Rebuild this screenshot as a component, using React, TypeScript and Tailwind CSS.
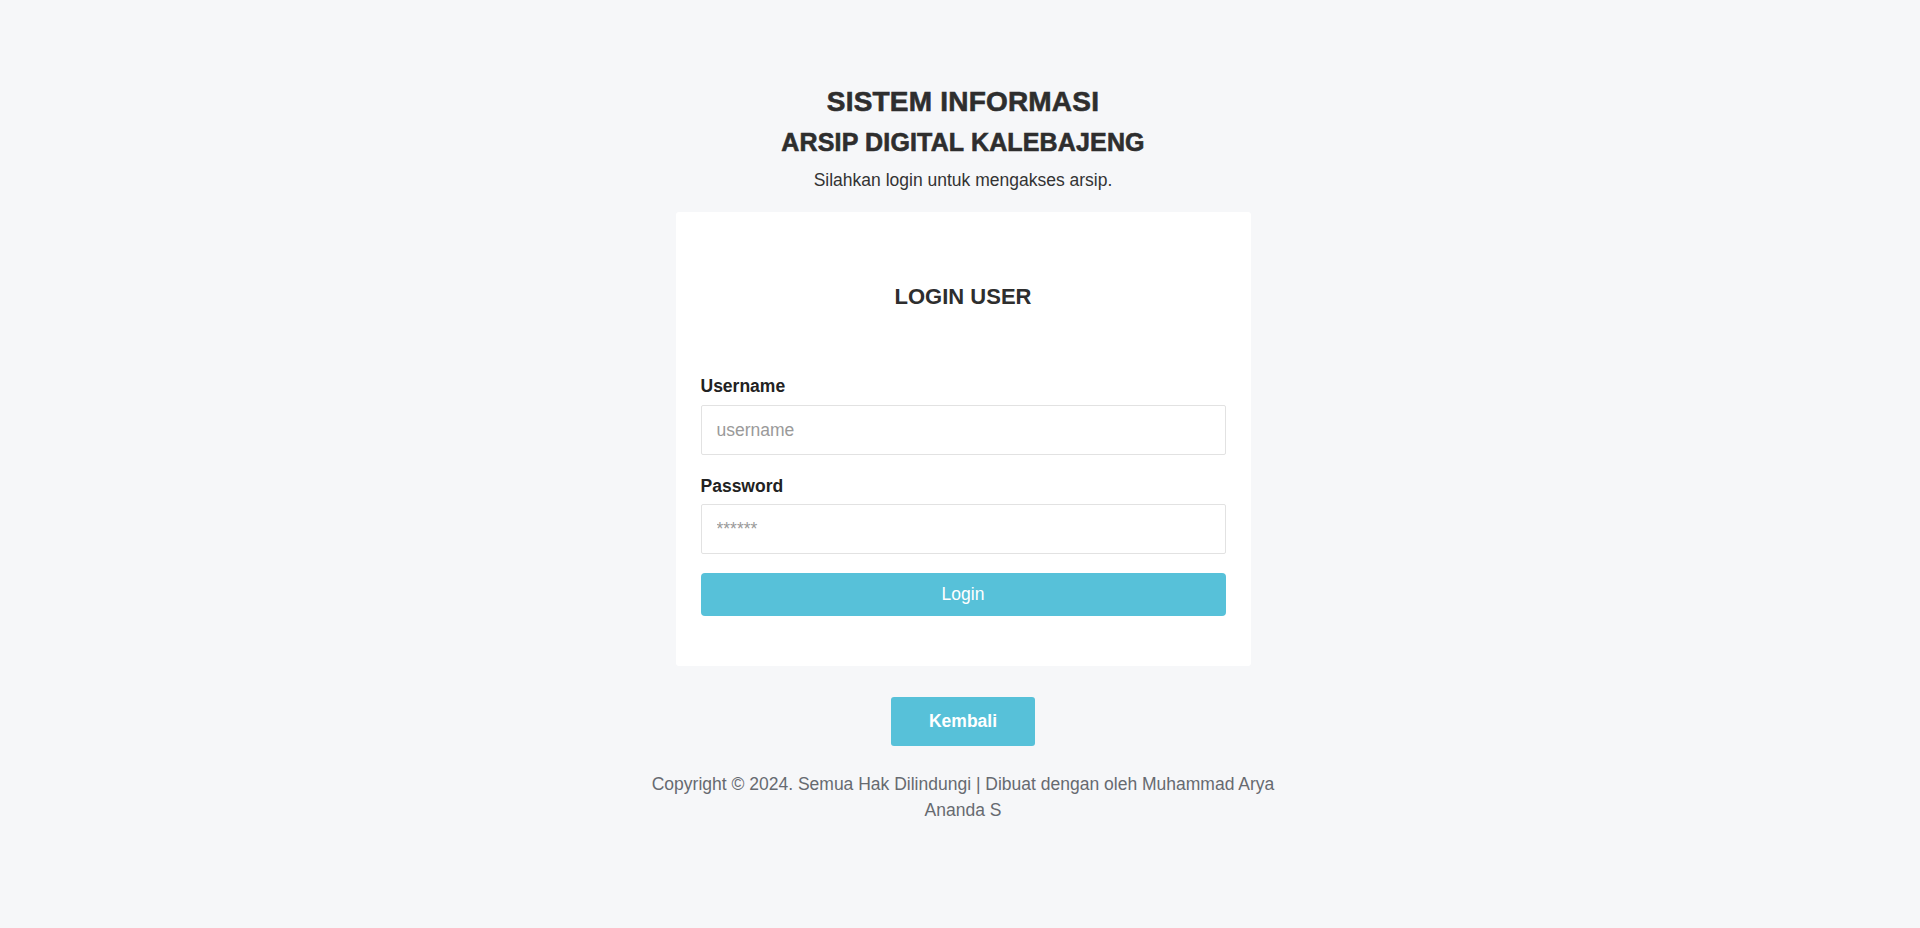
export default function App() {
  return (
    <div className="min-h-screen w-full bg-[#f6f7f9] font-['Liberation_Sans',Arial,sans-serif] text-[#333333]">
      <div className="flex flex-col items-center pt-[85px] pb-10 pl-[6px]">
        {/* Header */}
        <h1 className="text-[28px] leading-[34px] font-bold tracking-[0.2px] text-[#2e2e2e] [-webkit-text-stroke:0.6px_#2e2e2e]">
          SISTEM INFORMASI
        </h1>
        <h2 className="mt-[8px] text-[25px] leading-[30px] font-bold tracking-[0.15px] text-[#2e2e2e] [-webkit-text-stroke:0.6px_#2e2e2e]">
          ARSIP DIGITAL KALEBAJENG
        </h2>
        <p className="mt-[10px] text-[17.5px] leading-[26px] text-[#333333]">Silahkan login untuk mengakses arsip.</p>

        {/* Login card */}
        <div className="mt-[19px] w-[575px] rounded-[3px] bg-white px-[25px] pt-[71px] pb-[50px]">
          <h3 className="text-center text-[22px] leading-[28px] font-bold text-[#2e2e2e]">LOGIN USER</h3>

          <form className="mt-[62px] flex flex-col" onSubmit={(e) => e.preventDefault()}>
            <label className="text-[17.5px] leading-[26px] font-bold text-[#222222]">Username</label>
            <input
              type="text"
              placeholder="username"
              className="mt-[6px] h-[50px] w-full rounded-[2px] border border-[#e2e2e2] bg-white px-[15px] text-[17.5px] text-[#333333] outline-none placeholder:text-[#9a9a9a]"
            />

            <label className="mt-[18px] text-[17.5px] leading-[26px] font-bold text-[#222222]">Password</label>
            <input
              type="password"
              placeholder="******"
              className="mt-[5px] h-[50px] w-full rounded-[2px] border border-[#e2e2e2] bg-white px-[15px] text-[17.5px] text-[#333333] outline-none placeholder:text-[#9a9a9a]"
            />

            <button
              type="submit"
              className="mt-[19px] h-[43px] w-full rounded-[4px] bg-[#57c1d9] text-[17.5px] text-white"
            >
              Login
            </button>
          </form>
        </div>

        {/* Back button */}
        <button className="mt-[31px] h-[49px] w-[144px] rounded-[3px] bg-[#57c1d9] text-[17.5px] font-bold text-white">
          Kembali
        </button>

        {/* Footer */}
        <p className="mt-[25px] w-[660px] text-center text-[17.5px] leading-[26px] text-[#666a70]">
          Copyright © 2024. Semua Hak Dilindungi | Dibuat dengan oleh Muhammad Arya Ananda S
        </p>
      </div>
    </div>
  );
}
